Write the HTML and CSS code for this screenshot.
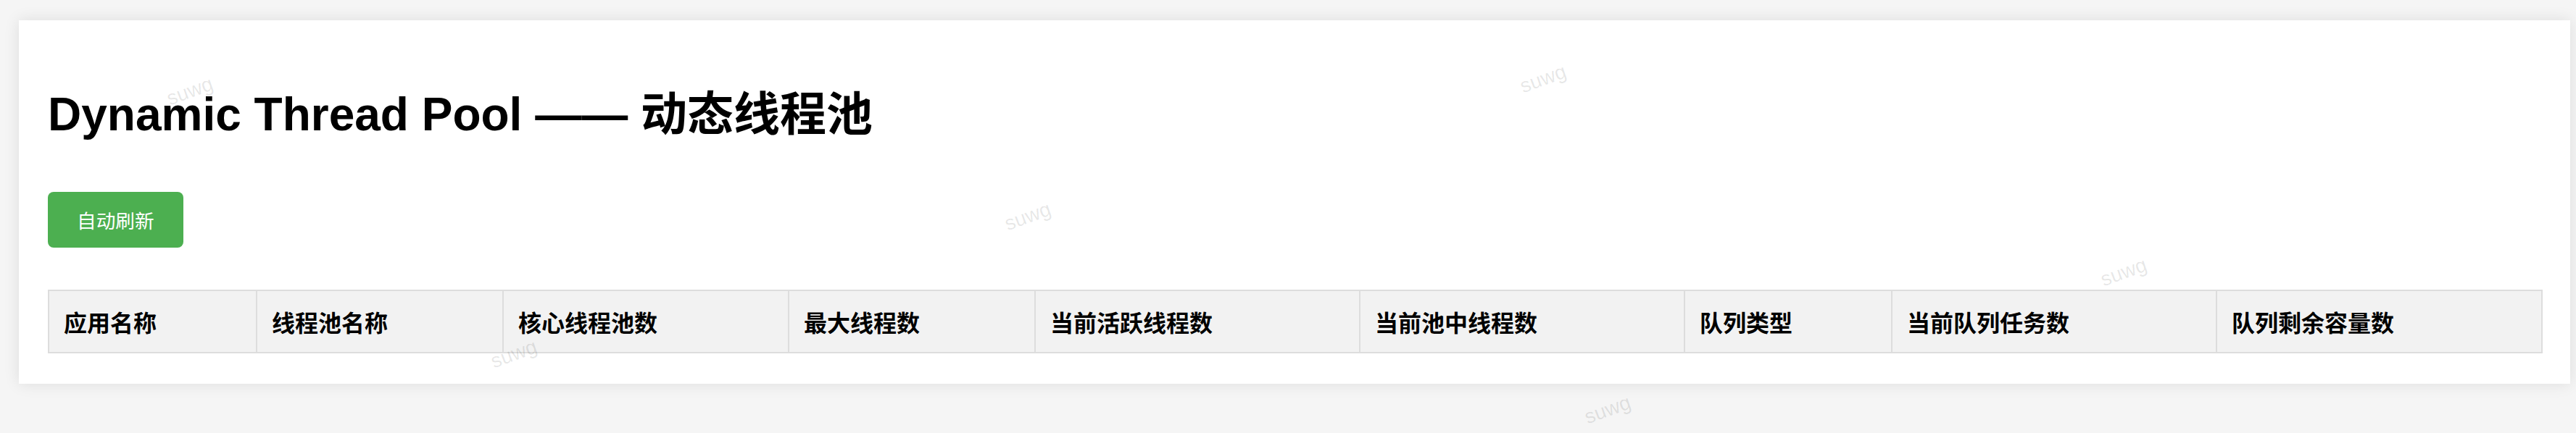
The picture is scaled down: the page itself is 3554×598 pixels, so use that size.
FILE: index.html
```html
<!DOCTYPE html>
<html lang="zh-CN">
<head>
<meta charset="utf-8">
<title>Dynamic Thread Pool</title>
<link rel="stylesheet" href="styles.css">
</head>
<body>
<div class="card">
  <h1 class="title">Dynamic Thread Pool —— 动态线程池</h1>
  <div class="actions">
    <button class="btn-refresh" type="button">自动刷新</button>
  </div>
  <table class="pool-table">
    <colgroup>
      <col class="c-app">
      <col class="c-pool">
      <col class="c-core">
      <col class="c-max">
      <col class="c-active">
      <col class="c-current">
      <col class="c-qtype">
      <col class="c-qsize">
      <col class="c-qremain">
    </colgroup>
    <thead>
      <tr>
        <th>应用名称</th>
        <th>线程池名称</th>
        <th>核心线程池数</th>
        <th>最大线程数</th>
        <th>当前活跃线程数</th>
        <th>当前池中线程数</th>
        <th>队列类型</th>
        <th>当前队列任务数</th>
        <th>队列剩余容量数</th>
      </tr>
    </thead>
    <tbody></tbody>
  </table>
</div>
<div class="watermarks" aria-hidden="true">
  <span class="wm wm1">suwg</span>
  <span class="wm wm2">suwg</span>
  <span class="wm wm3">suwg</span>
  <span class="wm wm4">suwg</span>
  <span class="wm wm5">suwg</span>
  <span class="wm wm6">suwg</span>
</div>
</body>
</html>
```

FILE: styles.css
```css
html, body {
  margin: 0;
  background: #f5f5f5;
}

body {
  padding: 28px 8px 0 26px;
  font-family: "Liberation Sans", "Noto Sans CJK SC", sans-serif;
  color: #000;
  position: relative;
  min-height: 570px;
}

.card {
  background: #fff;
  padding: 40px;
  box-shadow: 0 0 20px rgba(0, 0, 0, 0.1);
  height: 502px;
  box-sizing: border-box;
}

.title {
  margin: 53px 0 0;
  font-family: "Liberation Sans", "Noto Sans CJK SC", sans-serif;
  font-size: 64px;
  font-weight: bold;
  line-height: 74px;
}

.actions {
  display: flex;
  margin-top: 70px;
}

.btn-refresh {
  height: 77px;
  padding: 0 40px;
  border: none;
  border-radius: 8px;
  background: #4caf50;
  color: #fff;
  font-family: "Noto Sans CJK SC", sans-serif;
  font-size: 26.67px;
  line-height: 77px;
}

.pool-table {
  margin-top: 58px;
  width: 100%;
  border-collapse: collapse;
  table-layout: fixed;
  border: 2px solid #ddd;
}

.pool-table th {
  border: 2px solid #ddd;
  background: #f2f2f2;
  padding: 20px 20px;
  text-align: left;
  font-family: "Noto Sans CJK SC", sans-serif;
  font-size: 32px;
  font-weight: bold;
  line-height: 44px;
  white-space: nowrap;
}

.c-app { width: 287px; }
.c-pool { width: 340px; }
.c-core { width: 394px; }
.c-max { width: 340px; }
.c-active { width: 448px; }
.c-current { width: 448px; }
.c-qtype { width: 286px; }
.c-qsize { width: 448px; }
.c-qremain { width: 449px; }

.watermarks {
  position: absolute;
  left: 0;
  top: 0;
  width: 100%;
  height: 598px;
  pointer-events: none;
  overflow: hidden;
}

.wm {
  position: absolute;
  font-family: "Liberation Sans", sans-serif;
  font-size: 28px;
  color: rgba(0, 0, 0, 0.1);
  transform: translate(-50%, -50%) rotate(-20deg);
  white-space: nowrap;
}

.wm1 { left: 262px; top: 126px; }
.wm2 { left: 2129px; top: 109px; }
.wm3 { left: 1418px; top: 299px; }
.wm4 { left: 709px; top: 489px; }
.wm5 { left: 2218px; top: 566px; }
.wm6 { left: 2930px; top: 376px; }
```
